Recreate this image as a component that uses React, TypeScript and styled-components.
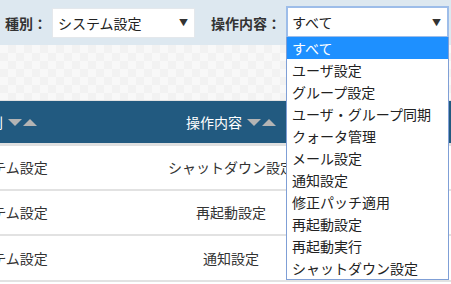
import React from "react";
import styled, { createGlobalStyle } from "styled-components";

const Global = createGlobalStyle`
  html, body { margin: 0; padding: 0; background: #fff; }
  body {
    font-family: "Noto Sans CJK JP", "Noto Sans", sans-serif;
    color: #333;
    width: 451px;
    height: 284px;
    overflow: hidden;
  }
`;

const Page = styled.div`
  width: 451px;
  height: 284px;
  overflow: hidden;
  position: relative;
`;

const FilterBar = styled.div`
  height: 45px;
  background: #dde8f0;
  display: flex;
  align-items: center;
  padding-left: 5px;
  box-sizing: border-box;
`;

const Label = styled.span`
  font-size: 14px;
  font-weight: bold;
  color: #333;
  margin-right: 5px;
  white-space: nowrap;
`;

const Field = styled.div<{ $width: number; $gap?: number }>`
  position: relative;
  width: ${(p) => p.$width}px;
  margin-right: ${(p) => p.$gap ?? 0}px;
  flex: none;
`;

const SelectBox = styled.div<{ $focused?: boolean }>`
  box-sizing: border-box;
  height: ${(p) => (p.$focused ? 32 : 30)}px;
  margin-top: ${(p) => (p.$focused ? -1 : 0)}px;
  background: #fff;
  border: ${(p) => (p.$focused ? "2px solid #9dbde9" : "1px solid #e4e8ec")};
  display: flex;
  align-items: center;
  justify-content: space-between;
  padding: 0 6px 0 ${(p) => (p.$focused ? 4 : 5)}px;
  font-size: 14px;
  color: #222;
`;

const Arrow = styled.span`
  font-size: 9px;
  color: #333;
`;

const DropList = styled.ul`
  position: absolute;
  left: 0;
  top: 30px;
  width: 100%;
  box-sizing: border-box;
  margin: 0;
  padding: 0;
  list-style: none;
  background: #fff;
  border: 1px solid #7f9fd6;
  border-top: none;
  z-index: 10;
`;

const Option = styled.li<{ $active?: boolean }>`
  height: 22px;
  line-height: 22px;
  padding-left: 5px;
  font-size: 14px;
  white-space: nowrap;
  color: ${(p) => (p.$active ? "#fff" : "#222")};
  background: ${(p) => (p.$active ? "#1e90ff" : "#fff")};
`;

const Checker = styled.div`
  height: 55px;
  background-color: #f8f8f8;
  background-image: conic-gradient(#f2f2f2 25%, transparent 0 50%, #f2f2f2 0 75%, transparent 0);
  background-size: 16px 16px;
  border-bottom: 1px solid #e2e2e2;
`;

const TableWrap = styled.div`
  overflow: hidden;
`;

const Table = styled.table`
  margin-left: -114px;
  border-collapse: collapse;
  table-layout: fixed;
  width: 700px;
`;

const HeadRow = styled.tr`
  background: #225a80;
  height: 43px;
  border-bottom: 3px solid #e0e0e0;
`;

const Th = styled.th<{ $w: number }>`
  width: ${(p) => p.$w}px;
  color: #fff;
  font-size: 14px;
  font-weight: normal;
  text-align: center;
  padding: 0;
  white-space: nowrap;
`;

const Sort = styled.span`
  display: inline-flex;
  align-items: center;
  gap: 1px;
  margin-left: 5px;
  vertical-align: middle;
  position: relative;
  top: -1px;
`;

const Tri = styled.span<{ $up?: boolean }>`
  width: 0;
  height: 0;
  border-left: 7px solid transparent;
  border-right: 7px solid transparent;
  ${(p) =>
    p.$up
      ? "border-bottom: 7px solid #b4b4b4;"
      : "border-top: 7px solid #b4b4b4;"}
`;

const Row = styled.tr`
  height: 45.5px;
  border-bottom: 2px solid #e2e2e2;
`;

const Td = styled.td`
  font-size: 14px;
  color: #333;
  text-align: center;
  padding: 0;
  white-space: nowrap;
`;

const options = [
  "すべて",
  "ユーザ設定",
  "グループ設定",
  "ユーザ・グループ同期",
  "クォータ管理",
  "メール設定",
  "通知設定",
  "修正パッチ適用",
  "再起動設定",
  "再起動実行",
  "シャットダウン設定",
];

const rows = [
  ["システム設定", "シャットダウン設定"],
  ["システム設定", "再起動設定"],
  ["システム設定", "通知設定"],
];

export default function App() {
  return (
    <Page>
      <Global />
      <FilterBar>
        <Label>種別：</Label>
        <Field $width={143} $gap={16}>
          <SelectBox>
            <span>システム設定</span>
            <Arrow>▼</Arrow>
          </SelectBox>
        </Field>
        <Label>操作内容：</Label>
        <Field $width={163}>
          <SelectBox $focused>
            <span>すべて</span>
            <Arrow>▼</Arrow>
          </SelectBox>
          <DropList>
            {options.map((o, i) => (
              <Option key={o} $active={i === 0}>
                {o}
              </Option>
            ))}
          </DropList>
        </Field>
      </FilterBar>
      <Checker />
      <TableWrap>
        <Table>
          <thead>
            <HeadRow>
              <Th $w={240}>
                種別
                <Sort>
                  <Tri />
                  <Tri $up />
                </Sort>
              </Th>
              <Th $w={210}>
                操作内容
                <Sort>
                  <Tri />
                  <Tri $up />
                </Sort>
              </Th>
              <Th $w={250} />
            </HeadRow>
          </thead>
          <tbody>
            {rows.map((r, i) => (
              <Row key={i}>
                <Td>{r[0]}</Td>
                <Td>{r[1]}</Td>
                <Td />
              </Row>
            ))}
          </tbody>
        </Table>
      </TableWrap>
    </Page>
  );
}
